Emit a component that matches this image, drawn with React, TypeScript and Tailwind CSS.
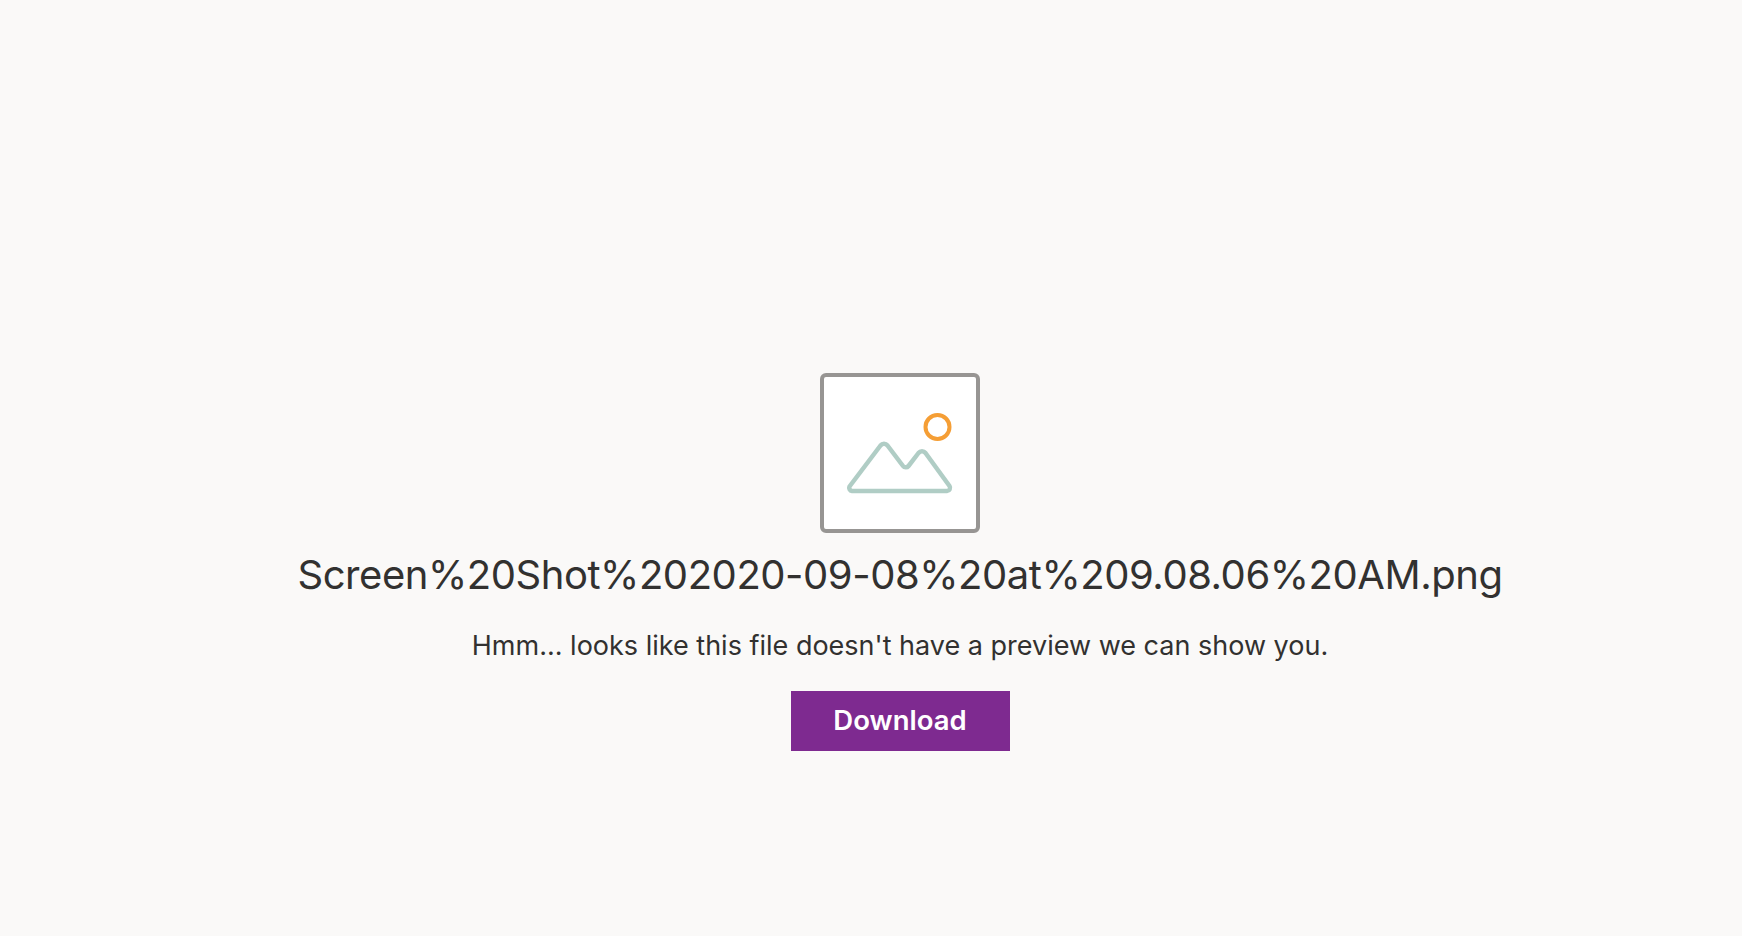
export default function App() {
  return (
    <div className="flex min-h-screen flex-col items-center bg-[#faf9f8] pt-[373px] pl-[58px] font-['Inter','Liberation_Sans',sans-serif] text-[#323130]">
      {/* placeholder image */}
      <svg className="h-40 w-40" viewBox="0 0 160 160" fill="none">
        <rect x="2" y="2" width="156" height="156" rx="4" fill="#fff" stroke="#979593" strokeWidth="4" />
        <circle cx="117.5" cy="54" r="12" stroke="#f59e35" strokeWidth="4" />
        <path
          d="M29.5 113.5 L60.5 72.5 a4.5 4.5 0 0 1 7 0 L83 93 a3.5 3.5 0 0 0 5.5 0 L98.5 80 a4.5 4.5 0 0 1 7 0 L129.5 113 a3.2 3.2 0 0 1 -2.5 5 H32 a3.2 3.2 0 0 1 -2.5 -4.5 Z"
          stroke="#b0cdc5"
          strokeWidth="4.5"
          strokeLinejoin="round"
        />
      </svg>
      <h1 className="mt-[14px] whitespace-nowrap text-[40px] leading-[56px] font-normal tracking-[-0.45px]">
        Screen%20Shot%202020-09-08%20at%209.08.06%20AM.png
      </h1>
      <p className="mt-[25px] whitespace-nowrap text-[27px] leading-[36px]">
        Hmm... looks like this file doesn't have a preview we can show you.
      </p>
      <button
        type="button"
        className="mt-[27px] flex h-[60px] w-[219px] items-center justify-center bg-[#7e2a90] text-[27.5px] font-semibold text-white"
      >
        Download
      </button>
    </div>
  );
}
